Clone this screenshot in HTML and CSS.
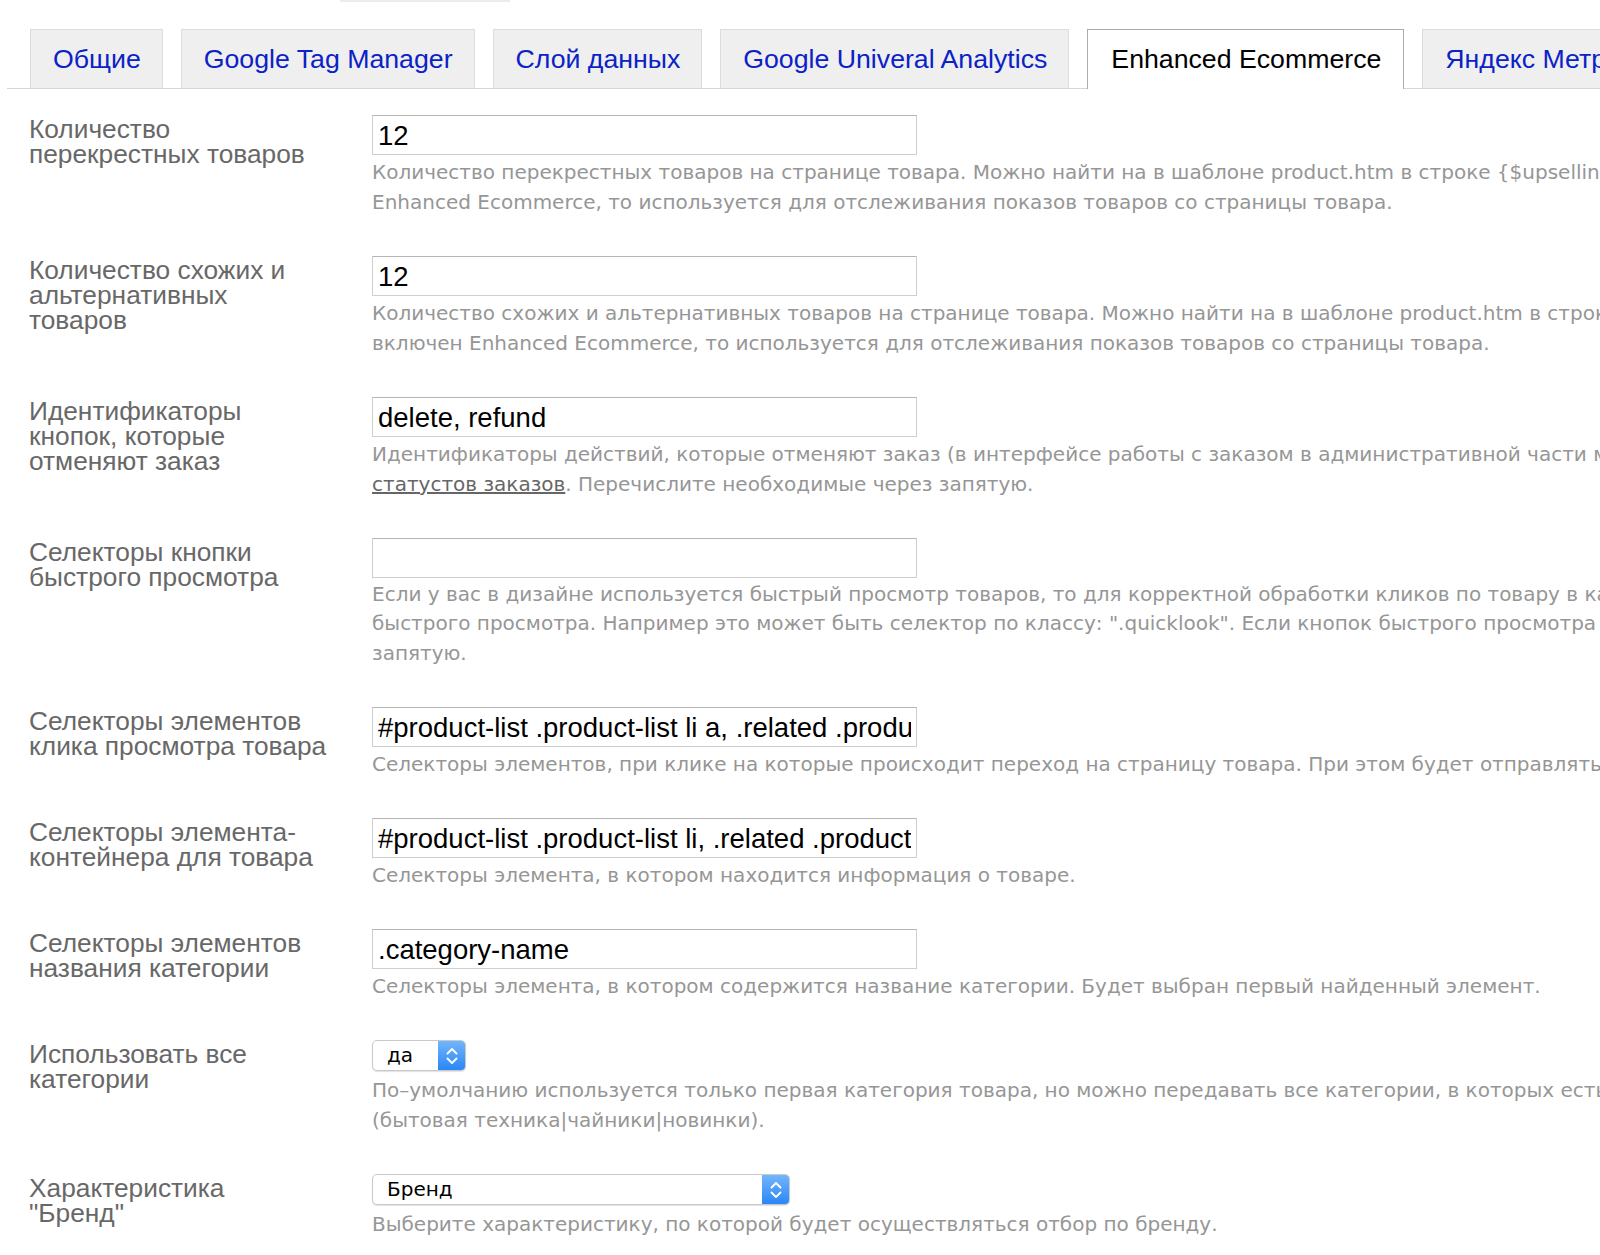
FILE: index.html
```html
<!DOCTYPE html>
<html>
<head>
  <title>Настройки — Enhanced Ecommerce</title>
  <link rel="stylesheet" href="styles.css">
</head>
<body>
  <div class="topbar"></div>

  <ul class="tabs">
    <li><a href="#">Общие</a></li>
    <li><a href="#">Google Tag Manager</a></li>
    <li><a href="#">Слой данных</a></li>
    <li><a href="#">Google Univeral Analytics</a></li>
    <li class="active"><a href="#">Enhanced Ecommerce</a></li>
    <li><a href="#">Яндекс Метрика</a></li>
  </ul>

  <div class="form">
    <div class="row">
      <div class="label">Количество<br>перекрестных товаров</div>
      <div class="field">
        <input class="text" type="text" value="12">
        <div class="hint">Количество перекрестных товаров на странице товара. Можно найти на в шаблоне product.htm в строке {$upselling = $wa->shop->crossSelling($product.id, 12)}. Если включен<br>Enhanced Ecommerce, то используется для отслеживания показов товаров со страницы товара.</div>
      </div>
    </div>

    <div class="row">
      <div class="label">Количество схожих и<br>альтернативных<br>товаров</div>
      <div class="field">
        <input class="text" type="text" value="12">
        <div class="hint">Количество схожих и альтернативных товаров на странице товара. Можно найти на в шаблоне product.htm в строке {$related = $product->related()}. Если<br>включен Enhanced Ecommerce, то используется для отслеживания показов товаров со страницы товара.</div>
      </div>
    </div>

    <div class="row">
      <div class="label">Идентификаторы<br>кнопок, которые<br>отменяют заказ</div>
      <div class="field">
        <input class="text" type="text" value="delete, refund">
        <div class="hint">Идентификаторы действий, которые отменяют заказ (в интерфейсе работы с заказом в административной части магазина), можно посмотреть в настройках<br><a href="#">статустов заказов</a>. Перечислите необходимые через запятую.</div>
      </div>
    </div>

    <div class="row">
      <div class="label">Селекторы кнопки<br>быстрого просмотра</div>
      <div class="field">
        <input class="text" type="text" value="">
        <div class="hint tight">Если у вас в дизайне используется быстрый просмотр товаров, то для корректной обработки кликов по товару в каталоге укажите селекторы кнопки<br>быстрого просмотра. Например это может быть селектор по классу: ".quicklook". Если кнопок быстрого просмотра несколько, перечислите их через<br>запятую.</div>
      </div>
    </div>

    <div class="row">
      <div class="label">Селекторы элементов<br>клика просмотра товара</div>
      <div class="field">
        <input class="text" type="text" value="#product-list .product-list li a, .related .product a">
        <div class="hint">Селекторы элементов, при клике на которые происходит переход на страницу товара. При этом будет отправляться событие клика по товару.</div>
      </div>
    </div>

    <div class="row">
      <div class="label">Селекторы элемента-<br>контейнера для товара</div>
      <div class="field">
        <input class="text" type="text" value="#product-list .product-list li, .related .product">
        <div class="hint">Селекторы элемента, в котором находится информация о товаре.</div>
      </div>
    </div>

    <div class="row">
      <div class="label">Селекторы элементов<br>названия категории</div>
      <div class="field">
        <input class="text" type="text" value=".category-name">
        <div class="hint">Селекторы элемента, в котором содержится название категории. Будет выбран первый найденный элемент.</div>
      </div>
    </div>

    <div class="row">
      <div class="label">Использовать все<br>категории</div>
      <div class="field">
        <div class="select small">
          <span class="value">да</span>
          <span class="arrows">
            <svg width="14" height="22" viewBox="0 0 14 22"><path d="M2.5 8.5 L7 4 L11.5 8.5 M2.5 13.5 L7 18 L11.5 13.5" fill="none" stroke="#fff" stroke-width="1.9" stroke-linecap="round" stroke-linejoin="round"/></svg>
          </span>
        </div>
        <div class="hint">По–умолчанию используется только первая категория товара, но можно передавать все категории, в которых есть товар, через разделитель<br>(бытовая техника|чайники|новинки).</div>
      </div>
    </div>

    <div class="row">
      <div class="label">Характеристика<br>"Бренд"</div>
      <div class="field">
        <div class="select wide">
          <span class="value">Бренд</span>
          <span class="arrows">
            <svg width="14" height="22" viewBox="0 0 14 22"><path d="M2.5 8.5 L7 4 L11.5 8.5 M2.5 13.5 L7 18 L11.5 13.5" fill="none" stroke="#fff" stroke-width="1.9" stroke-linecap="round" stroke-linejoin="round"/></svg>
          </span>
        </div>
        <div class="hint">Выберите характеристику, по которой будет осуществляться отбор по бренду.</div>
      </div>
    </div>
  </div>
</body>
</html>
```

FILE: styles.css
```css
html, body {
  margin: 0;
  overflow: hidden;
  background: #fff;
}
body {
  font-family: 'Liberation Sans', Arial, sans-serif;
  color: #000;
}

.topbar {
  margin-left: 340px;
  width: 170px;
  height: 2px;
  background: #ececec;
}

.tabs {
  list-style: none;
  margin: 27px 0 0 7px;
  padding: 0 0 0 23px;
  display: flex;
  gap: 18px;
  border-bottom: 1px solid #d6d6d6;
  white-space: nowrap;
}
.tabs li {
  background: #efefef;
  border: 1px solid #dcdcdc;
  border-bottom: none;
  height: 58px;
  margin-bottom: -1px;
  padding: 0 21px 0 22px;
  display: flex;
  align-items: center;
  flex-shrink: 0;
}
.tabs li a {
  font-size: 26.7px;
  color: #0b22c6;
  text-decoration: none;
}
.tabs li.active {
  background: #fff;
  border-color: #ababab;
  height: 59px;
  padding: 0 22px 0 23px;
}
.tabs li.active a { color: #000; }

.form { padding: 26px 0 0 29px; }
.row {
  display: flex;
  margin-bottom: 39px;
}
.label {
  flex: 0 0 305px;
  margin-right: 38px;
  padding-top: 2px;
  font-size: 26.3px;
  line-height: 25px;
  color: #686868;
  white-space: nowrap;
}
.field {
  flex: 1;
  min-width: 0;
}
.text {
  display: block;
  box-sizing: border-box;
  width: 545px;
  height: 40px;
  margin: 0;
  padding: 2px 5px 0;
  border: 1px solid #cfcfcf;
  border-top-color: #b5b5b5;
  font-family: 'Liberation Sans', Arial, sans-serif;
  font-size: 27.5px;
  color: #000;
  outline: none;
}
.hint {
  padding-top: 2px;
  font-family: 'DejaVu Sans', Verdana, sans-serif;
  font-size: 20px;
  line-height: 30px;
  color: #969696;
  white-space: nowrap;
}
.hint.tight { line-height: 29.4px; }
.hint a {
  color: #666;
  text-decoration: underline;
}

.select {
  display: flex;
  box-sizing: border-box;
  height: 31px;
  margin-bottom: 2px;
  border: 1px solid #c9c9c9;
  border-radius: 5px;
  box-shadow: 0 1px 1px rgba(0,0,0,.12);
  overflow: hidden;
  background: #fff;
}
.select.small { width: 94px; }
.select.wide { width: 418px; }
.select .value {
  flex: 1;
  padding-left: 14px;
  font-family: 'DejaVu Sans', Verdana, sans-serif;
  font-size: 20px;
  line-height: 29px;
}
.select .arrows {
  width: 27px;
  display: flex;
  align-items: center;
  justify-content: center;
  background: linear-gradient(#72b6fb, #2a86f7);
}
```
